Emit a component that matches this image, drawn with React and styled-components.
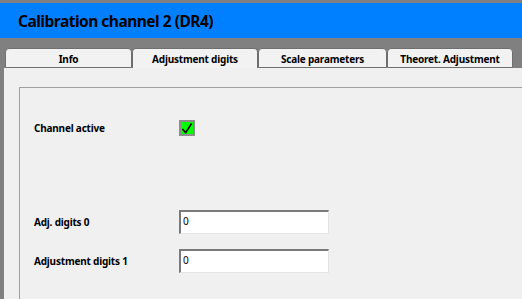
import React from "react";
import styled, { createGlobalStyle } from "styled-components";

const Global = createGlobalStyle`
  html, body { margin: 0; padding: 0; }
  body { background: #f0f0f0; font-family: "Noto Sans", "DejaVu Sans", sans-serif; }
`;

const Frame = styled.div`
  width: 522px;
  height: 299px;
  box-sizing: border-box;
  overflow: hidden;
  background: #808080;
  border-top: 3px solid #808080;
  padding-left: 4px;
  display: flex;
  flex-direction: column;
`;

const TitleBar = styled.div`
  height: 35px;
  margin-left: -4px;
  padding-left: 18px;
  background: #0080ff;
  display: flex;
  align-items: center;
  font-size: 15.5px;
  letter-spacing: -0.5px;
  font-weight: bold;
  color: #000;
  flex-shrink: 0;
  white-space: nowrap;
`;

const Spacer = styled.div`
  height: 10px;
  flex-shrink: 0;
`;

const TabRow = styled.div`
  display: flex;
  height: 20px;
  padding-left: 1px;
  flex-shrink: 0;
`;

const Tab = styled.div`
  box-sizing: border-box;
  width: ${(p) => p.$w}px;
  height: 20px;
  background: #f2f2f2;
  border: 1px solid #6f6f6f;
  border-bottom: ${(p) => (p.$active ? "none" : "1px solid #6f6f6f")};
  border-radius: 4px 4px 0 0;
  display: flex;
  align-items: center;
  justify-content: center;
  font-size: 10px;
  letter-spacing: -0.2px;
  font-weight: bold;
  color: #000;
  white-space: nowrap;
  padding-top: 1px;
`;

const Panel = styled.div`
  flex: 1;
  background: #f0f0f0;
  padding: 19px 0 0 15px;
  display: flex;
`;

const GroupBox = styled.div`
  flex: 1;
  border-top: 1px solid #a0a0a0;
  border-left: 1px solid #a0a0a0;
  padding: 32px 0 0 14px;
  display: flex;
  flex-direction: column;
`;

const Row = styled.div`
  display: flex;
  align-items: center;
  height: ${(p) => p.$h}px;
  margin-top: ${(p) => p.$mt || 0}px;
`;

const Label = styled.div`
  width: 145px;
  font-size: 10px;
  letter-spacing: -0.2px;
  font-weight: bold;
  color: #000;
  white-space: nowrap;
`;

const CheckBox = styled.div`
  box-sizing: border-box;
  width: 16px;
  height: 16px;
  background: #00ff00;
  border: 2px solid #8c8c8c;
  display: flex;
  align-items: center;
  justify-content: center;
`;

const Input = styled.div`
  box-sizing: border-box;
  width: 150px;
  height: 24px;
  background: #fff;
  border-top: 2px solid #7a7a7a;
  border-left: 2px solid #7a7a7a;
  border-right: 1px solid #e4e4e4;
  border-bottom: 1px solid #e4e4e4;
  font-size: 10px;
  padding: 2px 0 0 2px;
  color: #000;
`;

export default function App() {
  return (
    <>
      <Global />
      <Frame>
        <TitleBar>Calibration channel 2 (DR4)</TitleBar>
        <Spacer />
        <TabRow>
          <Tab $w={127}>Info</Tab>
          <Tab $w={126} $active>Adjustment digits</Tab>
          <Tab $w={129}>Scale parameters</Tab>
          <Tab $w={126}>Theoret. Adjustment</Tab>
        </TabRow>
        <Panel>
          <GroupBox>
            <Row $h={16}>
              <Label>Channel active</Label>
              <CheckBox>
                <svg width="13" height="13" viewBox="0 0 13 13">
                  <path d="M1.5 7 L5 11 L11.5 1" fill="none" stroke="#000" strokeWidth="1.8" />
                </svg>
              </CheckBox>
            </Row>
            <Row $h={24} $mt={74}>
              <Label>Adj. digits 0</Label>
              <Input>0</Input>
            </Row>
            <Row $h={24} $mt={15}>
              <Label>Adjustment digits 1</Label>
              <Input>0</Input>
            </Row>
          </GroupBox>
        </Panel>
      </Frame>
    </>
  );
}
